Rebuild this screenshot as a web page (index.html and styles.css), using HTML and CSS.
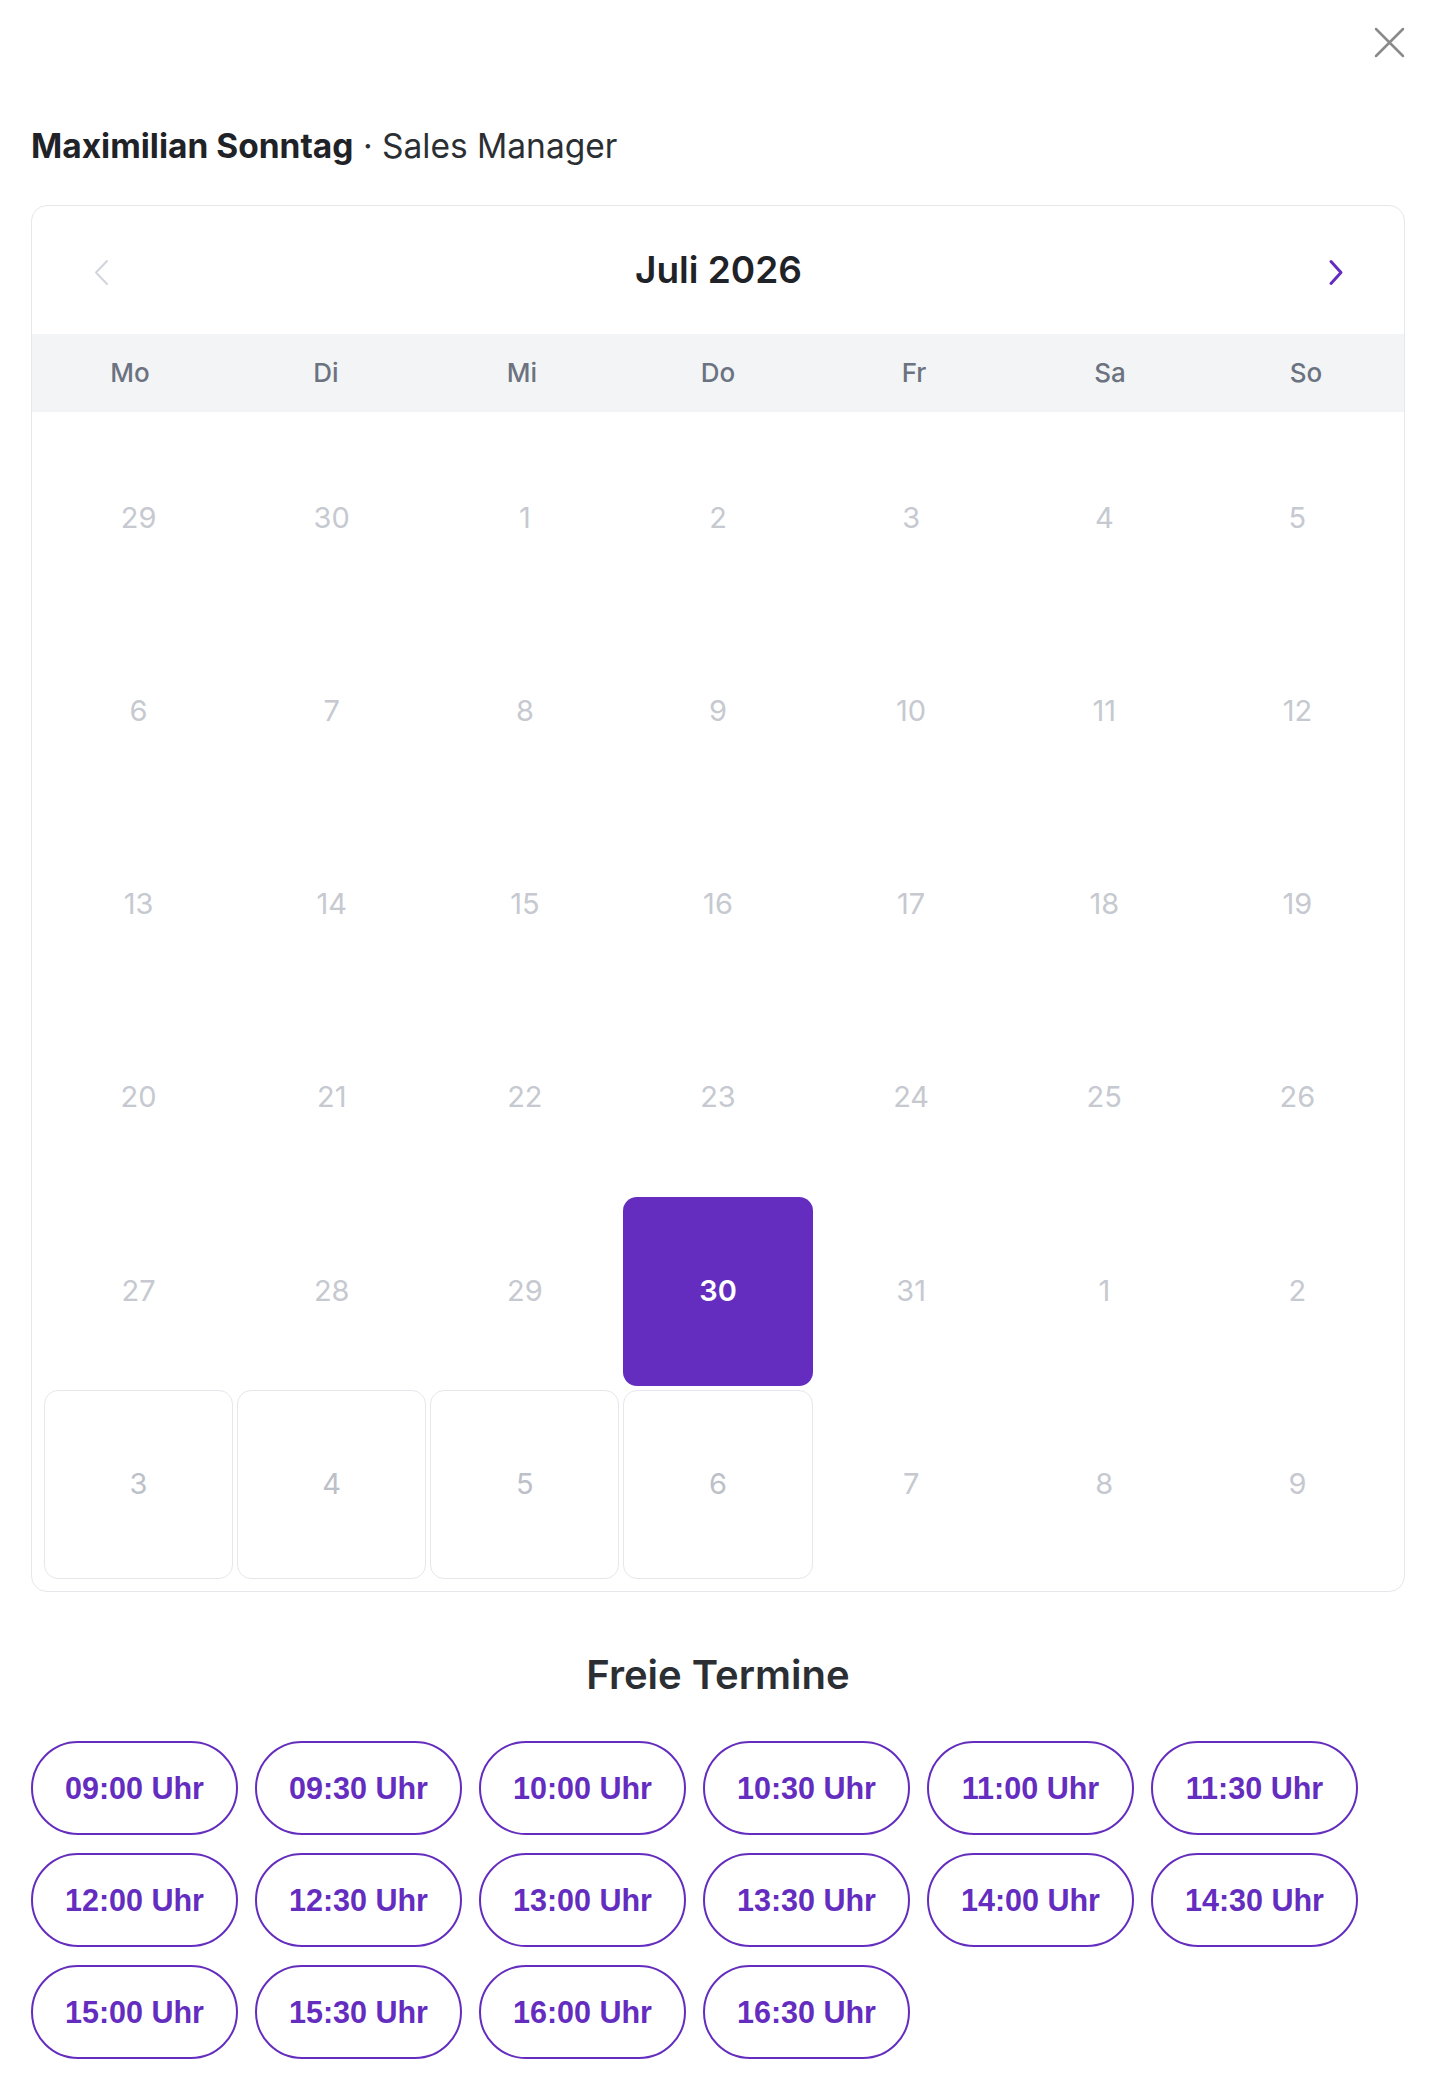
FILE: index.html
```html
<!DOCTYPE html>
<html lang="de">
<head>
<meta charset="utf-8">
<title>Termin buchen</title>
<link rel="stylesheet" href="styles.css">
</head>
<body>
<div class="modal">
  <div class="topbar">
    <button class="close" aria-label="Schließen">
      <svg width="31" height="31" viewBox="0 0 31 31"><path d="M2 2 L29 29 M29 2 L2 29" stroke="#8a8a8a" stroke-width="2.5" stroke-linecap="round" fill="none"/></svg>
    </button>
  </div>

  <h1 class="person"><strong>Maximilian Sonntag</strong> · Sales Manager</h1>

  <div class="calendar">
    <div class="cal-head">
      <span class="nav nav-prev">
        <svg width="16" height="27" viewBox="0 0 16 27"><path d="M14 2 L3 13.5 L14 25" stroke="#d1d5db" stroke-width="2" fill="none" stroke-linecap="round" stroke-linejoin="round"/></svg>
      </span>
      <h2 class="month">Juli 2026</h2>
      <span class="nav nav-next">
        <svg width="16" height="27" viewBox="0 0 16 27"><path d="M3 2.5 L13 13.5 L3 24.5" stroke="#642dbf" stroke-width="3" fill="none" stroke-linecap="round" stroke-linejoin="round"/></svg>
      </span>
    </div>
    <div class="weekdays">
      <span>Mo</span><span>Di</span><span>Mi</span><span>Do</span><span>Fr</span><span>Sa</span><span>So</span>
    </div>
    <div class="days">
      <span class="day">29</span><span class="day">30</span><span class="day">1</span><span class="day">2</span><span class="day">3</span><span class="day">4</span><span class="day">5</span>
      <span class="day">6</span><span class="day">7</span><span class="day">8</span><span class="day">9</span><span class="day">10</span><span class="day">11</span><span class="day">12</span>
      <span class="day">13</span><span class="day">14</span><span class="day">15</span><span class="day">16</span><span class="day">17</span><span class="day">18</span><span class="day">19</span>
      <span class="day">20</span><span class="day">21</span><span class="day">22</span><span class="day">23</span><span class="day">24</span><span class="day">25</span><span class="day">26</span>
      <span class="day">27</span><span class="day">28</span><span class="day">29</span><span class="day selected">30</span><span class="day">31</span><span class="day">1</span><span class="day">2</span>
      <span class="day boxed">3</span><span class="day boxed">4</span><span class="day boxed">5</span><span class="day boxed">6</span><span class="day">7</span><span class="day">8</span><span class="day">9</span>
    </div>
  </div>

  <h2 class="slots-title">Freie Termine</h2>
  <div class="slots">
    <button class="slot">09:00 Uhr</button>
    <button class="slot">09:30 Uhr</button>
    <button class="slot">10:00 Uhr</button>
    <button class="slot">10:30 Uhr</button>
    <button class="slot">11:00 Uhr</button>
    <button class="slot">11:30 Uhr</button>
    <button class="slot">12:00 Uhr</button>
    <button class="slot">12:30 Uhr</button>
    <button class="slot">13:00 Uhr</button>
    <button class="slot">13:30 Uhr</button>
    <button class="slot">14:00 Uhr</button>
    <button class="slot">14:30 Uhr</button>
    <button class="slot">15:00 Uhr</button>
    <button class="slot">15:30 Uhr</button>
    <button class="slot">16:00 Uhr</button>
    <button class="slot">16:30 Uhr</button>
  </div>
</div>
</body>
</html>
```

FILE: styles.css
```css
* {
  box-sizing: border-box;
}

body {
  margin: 0;
  background: #ffffff;
  font-family: Inter, "Noto Sans", sans-serif;
  color: #212529;
}

.modal {
  padding: 27px 29px 24px 31px;
}

.topbar {
  display: flex;
  justify-content: flex-end;
}

.close {
  display: block;
  padding: 0;
  border: 0;
  background: none;
  width: 31px;
  height: 31px;
  cursor: pointer;
}

.close svg {
  display: block;
}

.person {
  margin: 68px 0 39px;
  font-size: 33.5px;
  line-height: 40px;
  font-weight: 400;
  color: #2b2f33;
}

.person strong {
  font-weight: 700;
  color: #1f2328;
}

/* month calendar card */
.calendar {
  border: 1px solid #e5e7eb;
  border-radius: 16px;
  overflow: hidden;
}

.cal-head {
  height: 128px;
  padding: 0 60px 2px 61px;
  display: flex;
  align-items: center;
  justify-content: space-between;
}

.nav {
  padding-top: 6px;
}

.nav svg {
  display: block;
}

.month {
  margin: 0;
  font-size: 37px;
  font-weight: 600;
  color: #1f2328;
}

.weekdays {
  display: grid;
  grid-template-columns: repeat(7, 1fr);
  height: 78px;
  padding-bottom: 2px;
  align-items: center;
  background: #f3f4f6;
  text-align: center;
  font-size: 26px;
  font-weight: 500;
  color: #6b7280;
}

.days {
  display: grid;
  grid-template-columns: repeat(7, 1fr);
  gap: 4px;
  padding: 12px;
}

.day {
  aspect-ratio: 1 / 1;
  display: flex;
  align-items: center;
  justify-content: center;
  padding-bottom: 2px;
  border-radius: 14px;
  font-size: 29px;
  color: #c6c9d0;
}

.day.boxed {
  border: 1.5px solid #e5e7eb;
  color: #bcc0c8;
}

.day.selected {
  background: #642dbf;
  color: #ffffff;
  font-weight: 600;
}

/* available time slots */
.slots-title {
  margin: 60px 0 43px;
  text-align: center;
  font-size: 40px;
  line-height: 46px;
  font-weight: 600;
  color: #2b2f33;
}

.slots {
  display: flex;
  flex-wrap: wrap;
  gap: 18px 17px;
}

.slot {
  width: 207px;
  padding: 28px 0;
  border: 2px solid #642dbf;
  border-radius: 999px;
  background: #ffffff;
  font-family: "Liberation Sans", Arial, sans-serif;
  font-size: 30.5px;
  line-height: 34px;
  font-weight: 700;
  color: #642dbf;
  cursor: pointer;
}
```
